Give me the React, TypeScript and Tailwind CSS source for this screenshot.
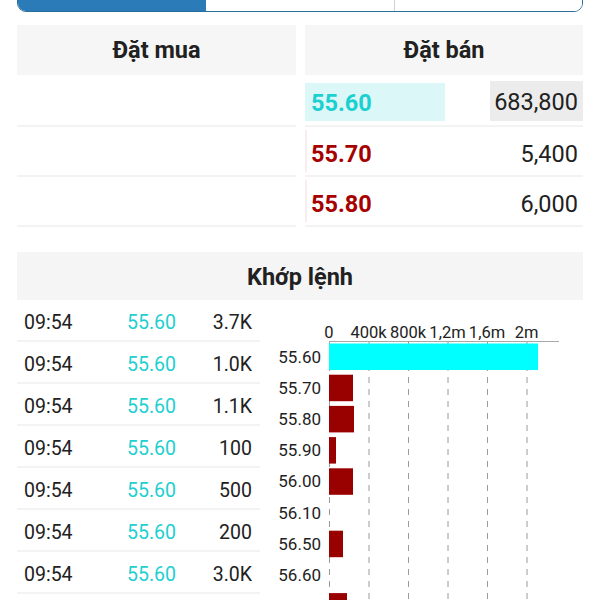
import React from "react";

const trades = [
  ["09:54", "55.60", "3.7K"],
  ["09:54", "55.60", "1.0K"],
  ["09:54", "55.60", "1.1K"],
  ["09:54", "55.60", "100"],
  ["09:54", "55.60", "500"],
  ["09:54", "55.60", "200"],
  ["09:54", "55.60", "3.0K"],
];

const bars: [string, number, boolean][] = [
  ["55.60", 209, true],
  ["55.70", 24, false],
  ["55.80", 25, false],
  ["55.90", 7, false],
  ["56.00", 24, false],
  ["56.10", 0, false],
  ["56.50", 14, false],
  ["56.60", 0, false],
  ["57.00", 18, false],
];

function Chart() {
  const x0 = 59;
  const axisY = 41;
  const step = 39.5;
  const ticks = ["0", "400k", "800k", "1,2m", "1,6m", "2m"];
  const band = 31.2;
  const c0 = 56.5;
  return (
    <svg width="313" height="300" viewBox="0 0 313 300" className="block shrink-0">
      {ticks.map((t, i) => (
        <text
          key={t}
          x={x0 + i * step}
          y={37.5}
          textAnchor="middle"
          fontSize="16.5"
          fill="#222"
          fontFamily="Roboto, sans-serif"
        >
          {t}
        </text>
      ))}
      {ticks.map((t, i) => (
        <line
          key={"g" + t}
          x1={x0 + i * step + 0.5}
          x2={x0 + i * step + 0.5}
          y1={axisY}
          y2={300}
          stroke="#9a9a9a"
          strokeWidth="1"
          strokeDasharray="6 6"
        />
      ))}
      <line x1={x0} x2={289} y1={axisY + 0.5} y2={axisY + 0.5} stroke="#a8a8a8" strokeWidth="1" />
      {bars.map(([label, w, cyan], i) => {
        const c = c0 + i * band;
        return (
          <g key={label}>
            <text
              x={51}
              y={c + 6}
              textAnchor="end"
              fontSize="17"
              fill="#222"
              fontFamily="Roboto, sans-serif"
            >
              {label}
            </text>
            {w > 0 && (
              <rect x={x0} y={c - 13} width={w} height={26.5} fill={cyan ? "#00ffff" : "#990000"} />
            )}
          </g>
        );
      })}
    </svg>
  );
}

export default function App() {
  return (
    <div
      className="w-[600px] h-[600px] overflow-hidden bg-white px-[17px] text-[#212121]"
      style={{ fontFamily: "Roboto, 'Noto Sans', sans-serif" }}
    >
      {/* tab bar */}
      <div className="mt-[-28px] h-[40px] flex rounded-b-[9px] border-[1.5px] border-[#2a6f9c] overflow-hidden">
        <div className="w-[188px] bg-[#2b7bb8]" />
        <div className="flex-1 border-r border-[#d0d0d0] bg-white" />
        <div className="flex-1 bg-white" />
      </div>

      {/* order book */}
      <div className="mt-[13px] flex gap-[9px]">
        <div className="w-[279px]">
          <div className="h-[50px] pt-[2px] bg-[#f6f6f6] flex items-center justify-center text-[23.5px] font-bold">
            Đặt mua
          </div>
          <div className="mt-[2px]">
            {[0, 1, 2].map((i) => (
              <div key={i} className="h-[50px] border-b-2 border-[#f3f3f3]" />
            ))}
          </div>
        </div>
        <div className="flex-1">
          <div className="h-[50px] pt-[2px] bg-[#f6f6f6] flex items-center justify-center text-[23.5px] font-bold">
            Đặt bán
          </div>
          <div className="mt-[2px]">
            <div className="h-[50px] border-b-2 border-[#f3f3f3] flex items-start pt-[4px]">
              <div className="mt-[2px] w-[140px] h-[38px] pt-[4px] bg-[#dcf7f7] flex items-center pl-[6px] text-[23.5px] font-bold text-[#1bd0d1]">
                55.60
              </div>
              <div className="ml-auto w-[93px] h-[40px] pt-[4px] bg-[#ececec] flex items-center justify-end pr-[5px] text-[23.5px]">
                683,800
              </div>
            </div>
            {[
              ["55.70", "5,400"],
              ["55.80", "6,000"],
            ].map(([p, v]) => (
              <div key={p} className="h-[50px] border-b-2 border-[#f3f3f3] flex items-center">
                <div className="h-[42px] pt-[7px] w-full border-l-2 border-[#f8ecec] flex items-center justify-between pl-[4px] pr-[5px] text-[23.5px]">
                  <span className="font-bold text-[#a60000]">{p}</span>
                  <span>{v}</span>
                </div>
              </div>
            ))}
          </div>
        </div>
      </div>

      {/* Khớp lệnh */}
      <div className="mt-[25px] h-[48px] pt-[4px] bg-[#f5f5f5] flex items-center justify-center text-[23.5px] font-bold">
        Khớp lệnh
      </div>

      <div className="flex gap-[10px]">
        <div className="w-[243px] shrink-0">
          {trades.map(([t, p, v], i) => (
            <div
              key={i}
              className="h-[42px] pt-[5px] border-b-2 border-[#f3f3f3] flex items-center pl-[7px] pr-[8px] text-[19.5px]"
            >
              <span className="w-[103px]">{t}</span>
              <span className="text-[#22cfcf]">{p}</span>
              <span className="ml-auto">{v}</span>
            </div>
          ))}
        </div>
        <Chart />
      </div>
    </div>
  );
}
